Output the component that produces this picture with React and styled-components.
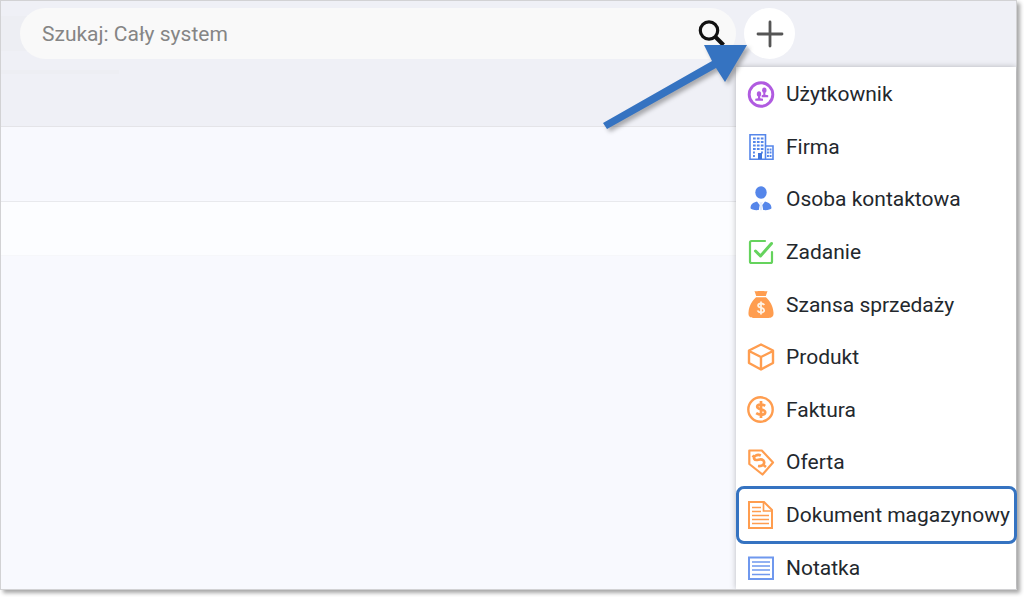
import React from "react";
import styled, { createGlobalStyle } from "styled-components";

const GlobalStyle = createGlobalStyle`
  * { box-sizing: border-box; }
  body {
    margin: 0;
    background: #fff;
    font-family: Roboto, "Liberation Sans", sans-serif;
    color: #23282d;
  }
`;

const Frame = styled.main`
  position: relative;
  display: flex;
  flex-direction: column;
  min-height: calc(100vh - 7px);
  margin: 0 7px 7px 0;
  border: 1px solid #d2d2d4;
  background: #f8f9fe;
  box-shadow: 3px 3px 4px rgba(0, 0, 0, 0.35);
`;

const Header = styled.header`
  position: relative;
  display: flex;
  align-items: flex-start;
  gap: 8px;
  height: 126px;
  padding: 7px 221px 0 19px;
  background: #eff0f6;
  border-bottom: 1px solid #e4e4e8;
`;

const HeaderShade = styled.span`
  position: absolute;
  left: 0;
  top: 15px;
  width: 40px;
  height: 35px;
  background: #edeef3;
`;

const HeaderRule = styled(HeaderShade)`
  top: 69px;
  width: 118px;
  height: 4px;
`;

const SearchBar = styled.form`
  position: relative;
  display: flex;
  align-items: center;
  flex: 1;
  height: 51px;
  padding: 0 11px 0 22px;
  border-radius: 26px;
  background: #f9f9f9;
`;

const SearchInput = styled.input`
  flex: 1;
  min-width: 0;
  padding: 0;
  border: 0;
  outline: 0;
  background: transparent;
  font: 400 21px/28px Roboto, "Liberation Sans", sans-serif;
  color: #333;
  &::placeholder { color: #858585; opacity: 1; }
`;

const IconButton = styled.button`
  display: flex;
  padding: 0;
  border: 0;
  background: transparent;
`;

const AddArea = styled.div`
  position: relative;
`;

const AddButton = styled(IconButton)`
  align-items: center;
  justify-content: center;
  width: 51px;
  height: 51px;
  border-radius: 50%;
  background: #fff;
`;

const Arrow = styled.svg`
  position: absolute;
  z-index: 3;
  right: 41px;
  top: 32px;
  pointer-events: none;
  filter: drop-shadow(3px 3px 2px rgba(0, 0, 0, 0.3));
`;

const Band = styled.section`
  height: ${(p) => p.$height}px;
  background: ${(p) => p.$color};
  border-bottom: 1px solid ${(p) => p.$line};
`;

const Menu = styled.nav`
  position: absolute;
  z-index: 2;
  top: 66px;
  right: 0;
  bottom: 0;
  display: flex;
  width: 280px;
  background: #fff;
  box-shadow: 0 0 6px rgba(0, 0, 0, 0.25);
  clip-path: inset(-8px -1px 0 -8px);
`;

const MenuList = styled.ul`
  display: flex;
  flex-direction: column;
  flex: 1;
  margin: 1px 0 -5px;
  padding: 0;
  list-style: none;
`;

const MenuItem = styled.li`
  position: relative;
  display: flex;
  flex: 1;
`;

const MenuLink = styled.a`
  display: flex;
  align-items: center;
  flex: 1;
  gap: 11px;
  padding-left: 11px;
  font-size: 21px;
  line-height: 28px;
  white-space: nowrap;
  color: inherit;
  text-decoration: none;
`;

const Highlight = styled.span`
  position: absolute;
  inset: -3px -1px -3px 0;
  border: 3px solid #3573c1;
  border-radius: 8px;
  pointer-events: none;
`;

const Glyph = styled.svg`
  flex: none;
  width: 28px;
  height: 28px;
  fill: none;
`;

const orange = "#ff9d4f";
const blue = "#5586ea";
const pale = "#6f98ee";

const icons = {
  user: (
    <>
      <circle cx="14" cy="14.500" r="11.800" stroke="#b05be0" strokeWidth="2.900" />
      <g fill="#b05be0">
        <ellipse cx="12" cy="14" rx="2.200" ry="2.700" />
        <path d="M11 16h2.200v2.300l2.800.4v2H8.300v-1.900l2.700-.6z" />
        <ellipse cx="17.300" cy="10.300" rx="2.200" ry="2.700" />
        <path d="M16.300 12.500h2v2.300l2.900.4v2h-6.500v-1.900l1.600-.6z" />
      </g>
    </>
  ),
  company: (
    <>
      <path d="M3 1.700h15.500v24.500H3zM18.500 13H26v13.200h-7.500" stroke={blue} strokeWidth="1.600" />
      <path
        d="M6 5.500h10.500M6 9h10.500M6 12.500h10.500M6 16h10.500"
        stroke={blue}
        strokeWidth="2"
        strokeDasharray="2.700 1.200"
      />
      <path d="M6 19.500h2.500M6 23h2.500M14 19.500h2.500M20 16.500h4.500M20 19.500h4.500M20 23h4.500" stroke={blue} strokeWidth="1.800" strokeDasharray="1.900 .700" />
      <path d="M11 20h4v6h-4z" fill="#3f74dc" />
    </>
  ),
  contact: (
    <g fill={blue}>
      <ellipse cx="14" cy="7.500" rx="5.700" ry="6.200" />
      <path d="M10 16.500 12.700 20l-.9 5c-4 .5-7.500-.5-8.300-1.700.2-4.200 2.400-5.800 6.500-6.800zM18 16.500 15.300 20l.9 5c4 .5 7.500-.5 8.300-1.700-.2-4.200-2.400-5.800-6.500-6.800z" />
      <path d="m12.700 16.800 1.300 1 1.300-1 .3 1-1.100 1.200.8 5.500-1.300 1-1.300-1 .8-5.500-1.100-1.200z" opacity=".2" />
    </g>
  ),
  task: (
    <g stroke="#65d35d" strokeLinecap="round" strokeLinejoin="round">
      <path d="M18 3H4.500C3.500 3 3 3.500 3 4.500v19c0 1 .5 1.500 1.500 1.500h19c1 0 1.500-.5 1.500-1.500V14" strokeWidth="2.200" />
      <path d="m8.500 13 5 5L24.500 5.500" strokeWidth="3" />
    </g>
  ),
  chance: (
    <>
      <path d="M7.500 0c2 .7 3.500-.4 6.500 0 3-.4 4.500.7 6.500 0l-1.700 5H9.200z" fill={orange} />
      <path d="M9 6.300h10c4 3.700 7 8.500 7.500 15.200.3 4-1.500 5.500-5 5.500h-15c-3.500 0-5.300-1.500-5-5.500C2 14.800 5 10 9 6.300z" fill={orange} />
      <path d="M17.300 14c-.7-1.200-1.800-1.500-3.200-1.500-3.800 0-4 3.600-.4 4.200 4.600.7 4.500 4.800.4 4.800-1.700 0-3-.6-3.600-2M14 10.500v13" stroke="#fff2e4" strokeWidth="1.800" />
    </>
  ),
  product: (
    <path d="m14 1.500 12 6v12.500l-12 6.500-12-6.500V7.500zM2 8l12 6 12-6M14 14v12" stroke={orange} strokeWidth="2.400" strokeLinejoin="round" />
  ),
  invoice: (
    <>
      <circle cx="13.500" cy="13.500" r="12.200" stroke={orange} strokeWidth="2.400" />
      <path d="M18.200 9.800c-2.500-1.600-8-1.800-8 1 0 3.400 8 1.800 8 5.500 0 3.300-6 3-9 .9M14 5v17" stroke={orange} strokeWidth="2.700" />
    </>
  ),
  offer: (
    <>
      <path d="M2.300 2.500h12.500L26 14.500 15.500 26.500 2.300 16z" stroke={orange} strokeWidth="2.200" strokeLinejoin="round" />
      <path d="M13.800 7.500C10 5.800 6 8.500 7.300 11c1.700 3 6.200-1.700 9 1.300 2.300 3-.5 6.500-5.300 5.700M5.500 7.500l2.200 2M16.500 17l2.500 2" stroke={orange} strokeWidth="2.600" />
    </>
  ),
  document: (
    <g stroke={orange}>
      <path d="M2 1h15l8 8v18H2z" strokeWidth="2" />
      <path d="M16.500 1v9H25" strokeWidth="1.700" />
      <path d="M5 6.500h9M5 10.500h9M5 14.500h17M5 18.500h17M5 22.500h17" strokeWidth="1.600" />
    </g>
  ),
  note: (
    <g stroke={pale}>
      <path d="M2 3.500h24v21.500H2z" strokeWidth="2" />
      <path d="M5 8h18M5 12h18M5 16h18M5 20.500h18" strokeWidth="1.700" />
    </g>
  ),
};

const entries = [
  ["user", "Użytkownik"],
  ["company", "Firma"],
  ["contact", "Osoba kontaktowa"],
  ["task", "Zadanie"],
  ["chance", "Szansa sprzedaży"],
  ["product", "Produkt"],
  ["invoice", "Faktura"],
  ["offer", "Oferta"],
  ["document", "Dokument magazynowy"],
  ["note", "Notatka"],
];

export default function App() {
  return (
    <>
      <GlobalStyle />
      <Frame>
        <Header>
          <HeaderShade />
          <HeaderRule />
          <SearchBar role="search" onSubmit={(e) => e.preventDefault()}>
            <SearchInput type="text" aria-label="Szukaj" placeholder="Szukaj: Cały system" />
            <IconButton type="submit" aria-label="Szukaj">
              <svg width="28" height="28" viewBox="0 0 28 28" fill="none" stroke="#111">
                <circle cx="12" cy="10.500" r="8.700" strokeWidth="3.200" />
                <path d="m18 16.500 8.500 8.500" strokeWidth="4" />
              </svg>
            </IconButton>
          </SearchBar>
          <AddArea>
            <AddButton type="button" aria-label="Dodaj" aria-expanded="true">
              <svg width="28" height="28" viewBox="0 0 28 28" stroke="#555" strokeWidth="2.800" strokeLinecap="round">
                <path d="M14 2v24M2 14h24" />
              </svg>
            </AddButton>
            <Arrow width="156" height="98" viewBox="0 0 156 98" aria-hidden="true">
              <path d="M5 83 114 21 106 5h43l-22 37-9-14L9 89z" fill="#3573c1" />
            </Arrow>
          </AddArea>
        </Header>
        <Band $height={75} $color="#f8f9fe" $line="#e8e9ed" />
        <Band $height={54} $color="#fcfdff" $line="#f6f7fa" />
        <Menu aria-label="Dodaj">
          <MenuList>
            {entries.map(([icon, label]) => (
              <MenuItem key={icon}>
                <MenuLink href="#">
                  <Glyph viewBox="0 0 28 28" aria-hidden="true">{icons[icon]}</Glyph>
                  {label}
                </MenuLink>
                {icon === "document" && <Highlight />}
              </MenuItem>
            ))}
          </MenuList>
        </Menu>
      </Frame>
    </>
  );
}
